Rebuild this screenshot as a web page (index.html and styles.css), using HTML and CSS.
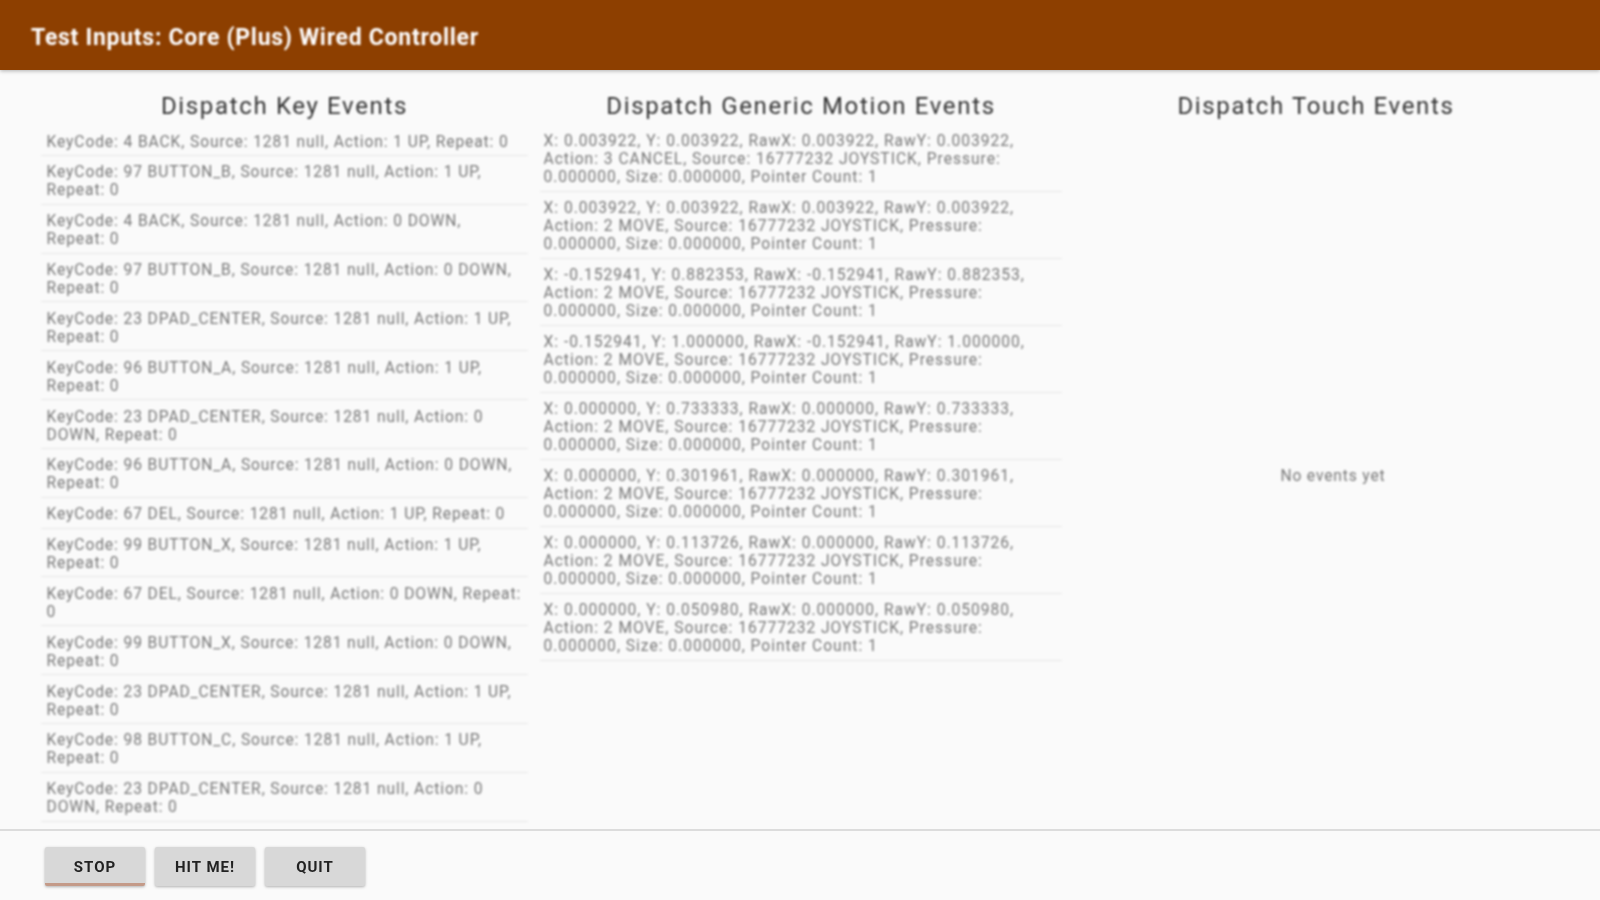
FILE: index.html
```html
<!DOCTYPE html>
<html lang="en">
<head>
<meta charset="utf-8">
<title>Test Inputs</title>
<link rel="stylesheet" href="styles.css">
</head>
<body>
<div class="app">
  <header class="appbar"><h1 class="title">Test Inputs: Core (Plus) Wired Controller</h1></header>
  <main class="columns">
    <section class="col col-keys">
      <h2 class="heading">Dispatch Key Events</h2>
      <ul class="list">
        <li class="row">KeyCode: 4 BACK, Source: 1281 null, Action: 1 UP, Repeat: 0</li>
        <li class="row">KeyCode: 97 BUTTON_B, Source: 1281 null, Action: 1 UP,<br>Repeat: 0</li>
        <li class="row">KeyCode: 4 BACK, Source: 1281 null, Action: 0 DOWN,<br>Repeat: 0</li>
        <li class="row">KeyCode: 97 BUTTON_B, Source: 1281 null, Action: 0 DOWN,<br>Repeat: 0</li>
        <li class="row">KeyCode: 23 DPAD_CENTER, Source: 1281 null, Action: 1 UP,<br>Repeat: 0</li>
        <li class="row">KeyCode: 96 BUTTON_A, Source: 1281 null, Action: 1 UP,<br>Repeat: 0</li>
        <li class="row">KeyCode: 23 DPAD_CENTER, Source: 1281 null, Action: 0<br>DOWN, Repeat: 0</li>
        <li class="row">KeyCode: 96 BUTTON_A, Source: 1281 null, Action: 0 DOWN,<br>Repeat: 0</li>
        <li class="row">KeyCode: 67 DEL, Source: 1281 null, Action: 1 UP, Repeat: 0</li>
        <li class="row">KeyCode: 99 BUTTON_X, Source: 1281 null, Action: 1 UP,<br>Repeat: 0</li>
        <li class="row">KeyCode: 67 DEL, Source: 1281 null, Action: 0 DOWN, Repeat:<br>0</li>
        <li class="row">KeyCode: 99 BUTTON_X, Source: 1281 null, Action: 0 DOWN,<br>Repeat: 0</li>
        <li class="row">KeyCode: 23 DPAD_CENTER, Source: 1281 null, Action: 1 UP,<br>Repeat: 0</li>
        <li class="row">KeyCode: 98 BUTTON_C, Source: 1281 null, Action: 1 UP,<br>Repeat: 0</li>
        <li class="row">KeyCode: 23 DPAD_CENTER, Source: 1281 null, Action: 0<br>DOWN, Repeat: 0</li>
      </ul>
    </section>
    <section class="col col-motion">
      <h2 class="heading">Dispatch Generic Motion Events</h2>
      <ul class="list">
        <li class="row">X: 0.003922, Y: 0.003922, RawX: 0.003922, RawY: 0.003922,<br>Action: 3 CANCEL, Source: 16777232 JOYSTICK, Pressure:<br>0.000000, Size: 0.000000, Pointer Count: 1</li>
        <li class="row">X: 0.003922, Y: 0.003922, RawX: 0.003922, RawY: 0.003922,<br>Action: 2 MOVE, Source: 16777232 JOYSTICK, Pressure:<br>0.000000, Size: 0.000000, Pointer Count: 1</li>
        <li class="row">X: -0.152941, Y: 0.882353, RawX: -0.152941, RawY: 0.882353,<br>Action: 2 MOVE, Source: 16777232 JOYSTICK, Pressure:<br>0.000000, Size: 0.000000, Pointer Count: 1</li>
        <li class="row">X: -0.152941, Y: 1.000000, RawX: -0.152941, RawY: 1.000000,<br>Action: 2 MOVE, Source: 16777232 JOYSTICK, Pressure:<br>0.000000, Size: 0.000000, Pointer Count: 1</li>
        <li class="row">X: 0.000000, Y: 0.733333, RawX: 0.000000, RawY: 0.733333,<br>Action: 2 MOVE, Source: 16777232 JOYSTICK, Pressure:<br>0.000000, Size: 0.000000, Pointer Count: 1</li>
        <li class="row">X: 0.000000, Y: 0.301961, RawX: 0.000000, RawY: 0.301961,<br>Action: 2 MOVE, Source: 16777232 JOYSTICK, Pressure:<br>0.000000, Size: 0.000000, Pointer Count: 1</li>
        <li class="row">X: 0.000000, Y: 0.113726, RawX: 0.000000, RawY: 0.113726,<br>Action: 2 MOVE, Source: 16777232 JOYSTICK, Pressure:<br>0.000000, Size: 0.000000, Pointer Count: 1</li>
        <li class="row">X: 0.000000, Y: 0.050980, RawX: 0.000000, RawY: 0.050980,<br>Action: 2 MOVE, Source: 16777232 JOYSTICK, Pressure:<br>0.000000, Size: 0.000000, Pointer Count: 1</li>
      </ul>
    </section>
    <section class="col col-touch">
      <h2 class="heading">Dispatch Touch Events</h2>
      <div class="empty">No events yet</div>
    </section>
  </main>
  <footer class="actions">
    <button class="btn btn-active">STOP</button>
    <button class="btn">HIT ME!</button>
    <button class="btn">QUIT</button>
  </footer>
</div>
</body>
</html>
```
FILE: styles.css
```css
* { box-sizing: border-box; }
html, body { margin: 0; padding: 0; height: 100%; }
body { background: #fafafa; font-family: Roboto, "Liberation Sans", sans-serif; overflow: hidden; }
.app { width: 1600px; height: 900px; display: flex; flex-direction: column; }
.appbar { height: 70px; flex: none; background: #8d3f00; display: flex; align-items: center; padding: 4px 31px 0; box-shadow: 0 1px 4px rgba(0,0,0,.3); position: relative; }
.title { margin: 0; font-size: 23px; font-weight: 700; letter-spacing: 0.72px; color: #fff; filter: blur(0.8px); }
.columns { flex: 1; min-height: 0; display: grid; grid-template-columns: 487px 522px 484px; column-gap: 12px; padding-left: 41px; overflow: hidden; filter: blur(0.9px); }
.col { display: flex; flex-direction: column; min-height: 0; }
.heading { margin: 0; height: 55px; line-height: 32px; padding-top: 20px; text-align: center; font-size: 24px; font-weight: 400; letter-spacing: 1.65px; color: #333; white-space: nowrap; }
.list { list-style: none; margin: 0; padding: 0; }
.row { padding: 7.5px 5px 4.35px 5.5px; border-bottom: 1px solid #e8e8e8; font-size: 15.6px; line-height: 18px; letter-spacing: 0.9px; color: #777; white-space: nowrap; }
.col-motion .row { padding: 7px 3px 5px 3.5px; letter-spacing: 0.99px; }
.col-touch { position: relative; }
.empty { flex: 1; display: flex; align-items: center; justify-content: center; padding-left: 34px; padding-bottom: 2px; font-size: 15.6px; letter-spacing: 0.85px; color: #777; }
.actions { height: 71px; flex: none; border-top: 2px solid #dcdcdc; display: flex; gap: 10px; padding: 16px 0 0 45px; background: #fafafa; }
.btn { width: 100px; height: 39px; padding: 0; border: 0; border-radius: 2px; background: #d8d8d8; font-family: inherit; font-size: 15px; font-weight: 700; letter-spacing: 1px; color: #222; box-shadow: 0 1px 3px rgba(0,0,0,.3); filter: blur(0.7px); }
.btn-active { border-bottom: 3px solid #c49a88; padding-top: 3px; }
```
